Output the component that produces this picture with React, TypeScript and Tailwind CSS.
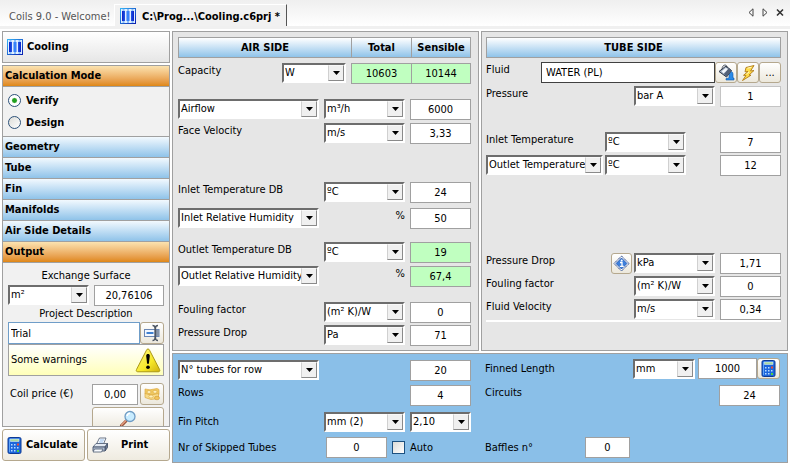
import type { ReactNode } from "react";
import clsx from "clsx";

const CoilIcon = () => (
  <svg width="16" height="16" viewBox="0 0 16 16" className="shrink-0">
    <defs>
      <linearGradient id="coilEdge" x1="0" y1="0" x2="1" y2="1">
        <stop offset="0" stopColor="#35b4f5" />
        <stop offset="1" stopColor="#0a1fb0" />
      </linearGradient>
      <linearGradient id="coilTube" x1="0" y1="0" x2="1" y2="0">
        <stop offset="0" stopColor="#0a20c8" />
        <stop offset="0.5" stopColor="#3a8cff" />
        <stop offset="1" stopColor="#0a20c8" />
      </linearGradient>
    </defs>
    <rect x="0.5" y="0.5" width="15" height="15" fill="#e4f0ff" stroke="url(#coilEdge)" />
    <path d="M2 3h3v10H2zM6.500 3h3v10h-3zM11 3h3v10h-3z" fill="url(#coilTube)" />
    <path d="M2.500 2h2M7 2h2M11.500 2h2M2.500 14h2M7 14h2M11.500 14h2" stroke="#2f8cf4" />
  </svg>
);

const CalculatorIcon = () => (
  <svg width="15" height="17" viewBox="0 0 15 17" className="shrink-0">
    <rect x="1" y="0.5" width="13" height="16" rx="1.5" fill="#1c66dc" stroke="#0c3a94" />
    <path d="M2.500 15V2" stroke="#5fa4f8" />
    <rect x="3.500" y="2" width="8.500" height="2.500" fill="#a8d8a0" stroke="#e8f5ff" strokeWidth="0.5" />
    <g fill="#b8dcff">
      <rect x="4" y="7" width="1.500" height="1.500" />
      <rect x="7" y="7" width="1.500" height="1.500" />
      <rect x="4" y="10" width="1.500" height="1.500" />
      <rect x="7" y="10" width="1.500" height="1.500" />
      <rect x="10" y="10" width="1.500" height="1.500" />
      <rect x="4" y="13" width="1.500" height="1.500" />
      <rect x="7" y="13" width="1.500" height="1.500" />
    </g>
    <rect x="10" y="6.500" width="2" height="2" fill="#f04a30" />
    <rect x="10" y="13" width="2" height="2" fill="#50d040" />
  </svg>
);

const PrinterIcon = () => (
  <svg width="17" height="16" viewBox="0 0 17 16" className="shrink-0">
    <path d="M4.500 7 7.500 1h6.500l-2.500 6z" fill="#fff" stroke="#59677c" strokeWidth="0.9" />
    <path d="M8 3h4M7.200 5h4" stroke="#7fb0e8" strokeWidth="0.9" />
    <path d="M1 10 4 6.500h11.500L13 10z" fill="#e3e9f2" stroke="#59677c" strokeWidth="0.9" />
    <path d="M13 10l2.500-3.500v4L13 14z" fill="#6d7b92" stroke="#46546b" strokeWidth="0.9" />
    <path d="M1 10h12v4H1z" fill="#b2bed0" stroke="#46546b" strokeWidth="0.9" />
    <path d="M2.500 12h8.500l-1.500 3H1z" fill="#f8fbff" stroke="#59677c" strokeWidth="0.9" />
  </svg>
);

const RenameIcon = () => (
  <svg width="18" height="18" viewBox="0 0 18 18">
    <rect x="1.500" y="5.500" width="14.500" height="7" fill="#f2f7ff" stroke="#6b87b4" />
    <path d="M3.500 9h7" stroke="#3f80d0" strokeWidth="2" />
    <rect x="12" y="6" width="4" height="6" fill="#8795a8" />
    <path
      d="M9.500 1.500c1.800 0 2.500.8 2.500 2.500v10c0 1.700-.7 2.500-2.500 2.500M15 1.500c-1.800 0-2.500.8-2.500 2.500v10c0 1.700.7 2.500 2.500 2.500"
      fill="none"
      stroke="#4c5562"
      strokeWidth="1.300"
    />
  </svg>
);

const WarningIcon = () => (
  <svg width="26" height="27" viewBox="0 0 27 27" className="shrink-0">
    <defs>
      <linearGradient id="warnFill" x1="0" y1="0" x2="1" y2="1">
        <stop offset="0" stopColor="#fff88a" />
        <stop offset="0.6" stopColor="#f6e828" />
        <stop offset="1" stopColor="#cfb010" />
      </linearGradient>
    </defs>
    <path
      d="M13.500 1.500c.8 0 1.200.5 1.600 1.300l10.400 20c.7 1.500.1 2.400-1.400 2.400H2.900c-1.500 0-2-.9-1.300-2.400l10.300-20c.4-.8.8-1.300 1.600-1.300z"
      fill="url(#warnFill)"
      stroke="#a89410"
    />
    <path d="M11.600 8.800c0-1.300.8-2 1.900-2s1.900.7 1.900 2L14.400 17h-1.800z" />
    <circle cx="13.500" cy="20.500" r="1.900" />
  </svg>
);

const MoneyIcon = () => (
  <svg width="18" height="16" viewBox="0 0 18 16">
    <path d="M2 3l5 .8L14 2.500l2 1v5L9 10 2 8z" fill="#f0c860" stroke="#e0ae48" strokeWidth="0.7" />
    <path d="M2 7.500l6 1.500 7.500-1.500v5L8 13.500l-6-2z" fill="#f7dc8c" stroke="#dba940" strokeWidth="0.7" />
    <ellipse cx="6" cy="6" rx="2" ry="1.500" fill="#fff1bc" stroke="#d9a63c" strokeWidth="0.6" />
    <ellipse cx="12" cy="5.800" rx="2" ry="1.500" fill="#fff1bc" stroke="#d9a63c" strokeWidth="0.6" />
    <ellipse cx="8" cy="10.500" rx="2.200" ry="1.500" fill="#fff1bc" stroke="#d9a63c" strokeWidth="0.6" />
    <ellipse cx="14" cy="12" rx="2.500" ry="1.800" fill="#f2c45a" stroke="#cf9630" strokeWidth="0.6" />
  </svg>
);

const SearchIcon = () => (
  <svg width="18" height="18" viewBox="0 0 18 18">
    <path d="M7 11L2.500 15.500" stroke="#96523a" strokeWidth="3" strokeLinecap="round" />
    <path d="M7 10.500L2.500 15" stroke="#e8a080" strokeWidth="1.200" strokeLinecap="round" />
    <circle cx="11" cy="6.500" r="5" fill="#c8ecff" stroke="#6f9cc4" strokeWidth="1.300" />
    <path d="M8 6c.3-1.700 1.500-2.600 3-2.700" fill="none" stroke="#fff" strokeWidth="1.500" />
  </svg>
);

const BucketIcon = () => (
  <svg width="17" height="17" viewBox="0 0 17 17">
    <path d="M10 7.500c3-.8 5 .2 5 2.500v4h1v2H8v-1.500l3-.5v-3c0-1-.5-1.500-1.500-1.500z" fill="#2a8ae8" stroke="#0e58ac" strokeWidth="0.6" />
    <path d="M1 7.500L8 2l5.500 4.500-5 6.500z" fill="#9aa8bc" stroke="#2e3848" />
    <path d="M3.500 7.300L8 3.800l2 1.700-4.500 4z" fill="#f2f6fb" />
    <path d="M8.500 13L6 10l5-6 2.500 2.500z" fill="#526078" />
    <path d="M4 5.500C4 2.500 5.500 1 7 1s2 1 2 3" fill="none" stroke="#2e3848" strokeWidth="0.8" />
  </svg>
);

const BoltIcon = () => (
  <svg width="16" height="18" viewBox="0 0 16 18">
    <path
      d="M6 3.500L14 1.500 10.500 7l3.500-.5L9 11l2 .2L2.500 16.500 6 11.500l-2.500-.2L8 7.500l-3 .3z"
      fill="#ffdc48"
      stroke="#b07a18"
      strokeWidth="0.9"
      strokeLinejoin="round"
    />
    <path d="M7.500 4.200l4-1M6.500 10L9 8" stroke="#fff8c8" />
  </svg>
);

const InfoIcon = () => (
  <svg width="17" height="17" viewBox="0 0 17 17">
    <path d="M8.500 1l7.500 7.500L8.500 16 1 8.500z" fill="#fff" stroke="#1c3c86" strokeDasharray="1.500 0.500" />
    <path d="M8.500 3L14 8.500 8.500 14 3 8.500z" fill="#3c7fdc" stroke="#1d4fa4" strokeWidth="0.800" />
    <path d="M7 7.500h2v3.500M6.800 11.300h4" fill="none" stroke="#fff" strokeWidth="1.300" />
    <circle cx="8.700" cy="5.400" r="1" fill="#fff" />
  </svg>
);

const TabArrows = () => (
  <div className="flex items-center gap-2 pt-2 pr-1.5">
    <button aria-label="Previous tab">
      <svg width="6" height="9" viewBox="0 0 6 9">
        <path d="M5 0.800v7.400L1 4.500z" fill="none" stroke="#444" />
      </svg>
    </button>
    <button aria-label="Next tab">
      <svg width="6" height="9" viewBox="0 0 6 9">
        <path d="M1 0.800v7.400L5 4.500z" fill="none" stroke="#444" />
      </svg>
    </button>
    <button aria-label="Close tab">
      <svg width="8" height="9" viewBox="0 0 8 9">
        <path d="M1 1.500l6 6M7 1.500l-6 6" stroke="#333" strokeWidth="1.600" />
      </svg>
    </button>
  </div>
);

type SelectProps = { label: string; value: string; className: string };

function Select({ label, value, className }: SelectProps) {
  return (
    <div
      className={clsx(
        "grid h-5 shrink-0 border-2 border-t-[#6d6d6d] border-r-white border-b-white border-l-[#6d6d6d] bg-white",
        className
      )}
    >
      <select
        aria-label={label}
        className="col-start-1 row-start-1 min-w-0 appearance-none bg-white pl-px text-[11px] leading-4 outline-none"
      >
        <option>{value}</option>
      </select>
      <span className="pointer-events-none col-start-1 row-start-1 flex w-4 items-center justify-center justify-self-end border border-t-[#f8f8f8] border-r-[#8a8a8a] border-b-[#8a8a8a] border-l-[#d0d0d0] bg-[#f0f0f0]">
        <svg width="7" height="4" viewBox="0 0 7 4">
          <path d="M0 0h7L3.500 4z" />
        </svg>
      </span>
    </div>
  );
}

type FieldProps = { label: string; value: string; className?: string; result?: boolean };

function Field({ label, value, className = "w-[61px] border-[#a0a0a0]", result }: FieldProps) {
  return (
    <input
      aria-label={label}
      defaultValue={value}
      className={clsx(
        "h-[21px] min-w-0 shrink-0 border text-center text-[11px] outline-none",
        result ? "bg-[#c0ffc0]" : "bg-white",
        className
      )}
    />
  );
}

function ToolButton({ label, className, children }: { label: string; className: string; children: ReactNode }) {
  return (
    <button
      aria-label={label}
      className={clsx(
        "flex shrink-0 items-center justify-center rounded-[3px] border border-[#b5a88e] bg-linear-to-b from-white to-[#ece8dc]",
        className
      )}
    >
      {children}
    </button>
  );
}

function Row({ className, center, children }: { className?: string; center?: boolean; children: ReactNode }) {
  return <div className={clsx("flex h-[21px]", center ? "items-center" : "items-start", className)}>{children}</div>;
}

const Label = ({ children }: { children: ReactNode }) => (
  <span className="min-w-0 flex-1 leading-4 whitespace-nowrap">{children}</span>
);

function SectionHeader({ title, active }: { title: string; active?: boolean }) {
  return (
    <button
      className={clsx(
        "block h-[21px] w-full border-b border-[#a0a0a0] bg-linear-to-b pl-0.5 text-left font-bold",
        active ? "from-[#fbe3b0] to-[#df8710]" : "from-[#f2f9fe] to-[#8fc3e9]"
      )}
    >
      {title}
    </button>
  );
}

const headCell = "border border-[#a0a0a0] bg-linear-to-b from-white to-[#8fc3e9] text-center leading-5";

function Sidebar() {
  return (
    <aside className="flex w-[168px] shrink-0 flex-col">
      <div className="flex h-8 items-center gap-1 border border-[#a0a0a0] bg-linear-to-b from-white to-[#e6e6e6] pl-1">
        <CoilIcon />
        <h1 className="font-bold">Cooling</h1>
      </div>
      <div className="mt-0.5 border border-[#a0a0a0] bg-[#f1f1f1]">
        <SectionHeader title="Calculation Mode" active />
        <div className="flex h-[50px] flex-col justify-center gap-1.5 border-b border-[#a0a0a0] pl-[5px] font-bold">
          {["Verify", "Design"].map((mode) => (
            <label key={mode} className="flex items-center gap-[5px] leading-4">
              <input
                type="radio"
                name="mode"
                defaultChecked={mode === "Verify"}
                className="size-[13px] appearance-none rounded-full border border-[#2c5078] bg-linear-to-br from-[#dcdcd8] to-white checked:bg-radial checked:from-[#21a121] checked:from-25% checked:to-white checked:to-40%"
              />
              {mode}
            </label>
          ))}
        </div>
        <SectionHeader title="Geometry" />
        <SectionHeader title="Tube" />
        <SectionHeader title="Fin" />
        <SectionHeader title="Manifolds" />
        <SectionHeader title="Air Side Details" />
        <SectionHeader title="Output" active />
        <div className="h-[163px] overflow-hidden px-[5px] pt-1">
          <p className="text-center leading-[18px]">Exchange Surface</p>
          <div className="flex justify-between">
            <Select label="Surface unit" value="m²" className="w-[81px]" />
            <Field label="Exchange Surface" value="20,76106" className="w-[70px] border-[#a0a0a0]" />
          </div>
          <p className="text-center leading-4">Project Description</p>
          <div className="flex">
            <input
              aria-label="Project Description"
              defaultValue="Trial"
              className="h-[22px] min-w-0 flex-1 border border-[#6f9dc8] bg-white pl-0.5 outline-none"
            />
            <ToolButton label="Edit description" className="h-[22px] w-6">
              <RenameIcon />
            </ToolButton>
          </div>
          <div className="flex h-8 items-center justify-between border border-[#a0a0a0] bg-linear-to-b from-white to-[#ffffb8] px-0.5">
            Some warnings
            <WarningIcon />
          </div>
          <div className="mt-[7px] flex items-center">
            <span className="flex-1 pl-0.5">Coil price (€)</span>
            <Field label="Coil price" value="0,00" className="w-[46px] border-[#a0a0a0]" />
            <ToolButton label="Price list" className="ml-0.5 h-[22px] w-6">
              <MoneyIcon />
            </ToolButton>
          </div>
          <ToolButton label="Search" className="mt-0.5 ml-auto h-6 w-[72px]">
            <SearchIcon />
          </ToolButton>
        </div>
      </div>
      <div className="mt-0.5 flex gap-0.5 font-bold">
        <button className="flex h-8 flex-1 items-center gap-1 rounded-[3px] border border-[#b5a88e] bg-linear-to-b from-white to-[#efebe0] pl-1">
          <CalculatorIcon />
          Calculate
        </button>
        <button className="flex h-8 flex-1 items-center gap-3 rounded-[3px] border border-[#b5a88e] bg-linear-to-b from-white to-[#efebe0] pl-1">
          <PrinterIcon />
          Print
        </button>
      </div>
    </aside>
  );
}

function AirSide() {
  return (
    <section className="border border-[#a0a0a0] bg-[#e6e6e6] pt-[5px] pr-[7px] pb-1 pl-[5px]">
      <div className="flex h-[21px] font-bold">
        <h2 className={clsx(headCell, "flex-1 border-r-0")}>AIR SIDE</h2>
        <div className={clsx(headCell, "w-[60px] border-r-0")}>Total</div>
        <div className={clsx(headCell, "w-[60px]")}>Sensible</div>
      </div>
      <Row className="mt-[5px]">
        <Label>Capacity</Label>
        <Select label="Capacity unit" value="W" className="mr-[5px] w-16" />
        <Field label="Total capacity" value="10603" result className="w-[60px] border-r-0 border-[#a0a0a0]" />
        <Field label="Sensible capacity" value="10144" result className="w-[60px] border-[#a0a0a0]" />
      </Row>
      <Row className="mt-[15px] gap-[5px]">
        <Select label="Air quantity" value="Airflow" className="flex-1" />
        <Select label="Airflow unit" value="m³/h" className="w-[81px]" />
        <Field label="Airflow" value="6000" />
      </Row>
      <Row className="mt-[3px] gap-[5px]">
        <Label>Face Velocity</Label>
        <Select label="Face Velocity unit" value="m/s" className="w-[81px]" />
        <Field label="Face Velocity" value="3,33" />
      </Row>
      <Row className="mt-[38px] gap-[5px]">
        <Label>Inlet Temperature DB</Label>
        <Select label="Inlet Temperature unit" value="ºC" className="w-[81px]" />
        <Field label="Inlet Temperature DB" value="24" />
      </Row>
      <Row className="mt-[5px] gap-[5px]">
        <Select label="Inlet humidity type" value="Inlet Relative Humidity" className="flex-1" />
        <span className="w-[81px] text-right leading-4">%</span>
        <Field label="Inlet Relative Humidity" value="50" />
      </Row>
      <Row className="mt-[13px] gap-[5px]">
        <Label>Outlet Temperature DB</Label>
        <Select label="Outlet Temperature unit" value="ºC" className="w-[81px]" />
        <Field label="Outlet Temperature DB" value="19" result />
      </Row>
      <Row className="mt-[3px] gap-[5px]">
        <Select label="Outlet humidity type" value="Outlet Relative Humidity" className="flex-1" />
        <span className="w-[81px] text-right leading-4">%</span>
        <Field label="Outlet Relative Humidity" value="67,4" result />
      </Row>
      <Row className="mt-[15px] gap-[5px]">
        <Label>Fouling factor</Label>
        <Select label="Fouling factor unit" value="(m² K)/W" className="w-[81px]" />
        <Field label="Fouling factor" value="0" />
      </Row>
      <Row className="mt-0.5 gap-[5px]">
        <Label>Pressure Drop</Label>
        <Select label="Pressure Drop unit" value="Pa" className="w-[81px]" />
        <Field label="Pressure Drop" value="71" />
      </Row>
    </section>
  );
}

function TubeSide() {
  return (
    <section className="border border-[#a0a0a0] bg-[#e6e6e6] pt-[5px] pr-1.5 pb-1 pl-1">
      <h2 className={clsx(headCell, "h-[21px] font-bold")}>TUBE SIDE</h2>
      <Row className="mt-1">
        <span className="w-[55px] leading-4">Fluid</span>
        <input
          aria-label="Fluid"
          defaultValue="WATER (PL)"
          className="h-[21px] min-w-0 flex-1 border border-[#404040] bg-white pl-1 outline-none"
        />
        <ToolButton label="Fluid fill" className="h-[21px] w-[22px]">
          <BucketIcon />
        </ToolButton>
        <ToolButton label="Fluid properties" className="h-[21px] w-[22px]">
          <BoltIcon />
        </ToolButton>
        <ToolButton label="More fluids" className="h-[21px] w-[22px]">
          ...
        </ToolButton>
      </Row>
      <Row className="mt-[3px] gap-[5px]">
        <Label>Pressure</Label>
        <Select label="Pressure unit" value="bar A" className="w-[81px]" />
        <Field label="Pressure" value="1" className="w-[61px] border-[#c4c4c4]" />
      </Row>
      <Row className="mt-[25px] gap-0.5">
        <Label>Inlet Temperature</Label>
        <Select label="Inlet Temperature unit" value="ºC" className="mr-8 w-[81px]" />
        <Field label="Inlet Temperature" value="7" />
      </Row>
      <Row className="mt-0.5 gap-0.5">
        <Select label="Outlet condition" value="Outlet Temperature" className="flex-1" />
        <Select label="Outlet Temperature unit" value="ºC" className="mr-8 w-[81px]" />
        <Field label="Outlet Temperature" value="12" />
      </Row>
      <Row className="mt-[77px] gap-[5px]">
        <Label>Pressure Drop</Label>
        <div className="flex gap-0.5">
          <ToolButton label="Pressure drop info" className="h-[21px] w-[21px]">
            <InfoIcon />
          </ToolButton>
          <Select label="Pressure Drop unit" value="kPa" className="w-[81px]" />
        </div>
        <Field label="Pressure Drop" value="1,71" />
      </Row>
      <Row className="mt-0.5 gap-[5px]">
        <Label>Fouling factor</Label>
        <Select label="Fouling factor unit" value="(m² K)/W" className="w-[81px]" />
        <Field label="Fouling factor" value="0" />
      </Row>
      <Row className="mt-0.5 gap-[5px]">
        <Label>Fluid Velocity</Label>
        <Select label="Fluid Velocity unit" value="m/s" className="w-[81px]" />
        <Field label="Fluid Velocity" value="0,34" />
      </Row>
      <hr className="border-t-2 border-white" />
    </section>
  );
}

function CoilGeometry() {
  return (
    <section className="mt-0.5 grid grid-cols-2 gap-0.5 border border-[#a0a0a0] bg-[#8abfe8] pb-1">
      <div className="pt-1.5 pr-2 pl-[5px]">
        <Row className="justify-between">
          <Select label="Tube count mode" value="N° tubes for row" className="w-[141px]" />
          <Field label="Tubes for row" value="20" />
        </Row>
        <Row className="mt-1">
          <Label>Rows</Label>
          <Field label="Rows" value="4" />
        </Row>
        <Row className="mt-[5px] gap-[5px]" center>
          <Label>Fin Pitch</Label>
          <Select label="Fin Pitch unit" value="mm (2)" className="w-[81px]" />
          <Select label="Fin Pitch" value="2,10" className="w-[61px]" />
        </Row>
        <Row className="mt-[5px] gap-[5px]" center>
          <Label>Nr of Skipped Tubes</Label>
          <Field label="Nr of Skipped Tubes" value="0" />
          <label className="flex w-[79px] items-center gap-[5px]">
            <input
              type="checkbox"
              className="size-[13px] appearance-none border border-[#1c5180] bg-linear-to-br from-[#dcdcd7] to-white"
            />
            Auto
          </label>
        </Row>
      </div>
      <div className="pt-1 pr-[7px] pl-1">
        <Row center>
          <Label>Finned Length</Label>
          <Select label="Finned Length unit" value="mm" className="mr-[3px] w-[62px]" />
          <Field label="Finned Length" value="1000" className="w-[59px] border-[#a0a0a0]" />
          <ToolButton label="Compute length" className="h-[21px] w-[23px]">
            <CalculatorIcon />
          </ToolButton>
        </Row>
        <Row className="mt-1.5">
          <Label>Circuits</Label>
          <Field label="Circuits" value="24" />
        </Row>
        <Row className="mt-[31px]" center>
          <span className="w-[100px]">Baffles n°</span>
          <Field label="Baffles n°" value="0" className="w-[45px] border-[#a0a0a0]" />
        </Row>
      </div>
    </section>
  );
}

export default function App() {
  return (
    <div className="min-h-screen bg-white font-['DejaVu_Sans_Condensed','Noto_Sans',sans-serif] text-[11px] leading-4 text-black">
      <nav className="flex h-[29px] items-start justify-between border-b-[3px] border-[#f0f0f0] bg-linear-to-b from-[#efefef] to-white">
        <div className="flex pt-1">
          <button className="h-[22px] w-[114px] pt-1 pl-[9px] text-left whitespace-nowrap text-[#555]">
            Coils 9.0 - Welcome!
          </button>
          <button className="flex h-[22px] items-center gap-1.5 border-t border-r border-l border-t-white border-r-[#555] border-l-white bg-[#f1f1f1] pr-1.5 pl-[5px] font-bold whitespace-nowrap">
            <CoilIcon />
            <span className="pt-0.5">C:\Prog...\Cooling.c6prj *</span>
          </button>
        </div>
        <TabArrows />
      </nav>
      <div className="flex gap-0.5 px-0.5 pt-0.5">
        <Sidebar />
        <main className="min-w-0 flex-1">
          <div className="grid grid-cols-2 gap-0.5">
            <AirSide />
            <TubeSide />
          </div>
          <CoilGeometry />
        </main>
      </div>
    </div>
  );
}
